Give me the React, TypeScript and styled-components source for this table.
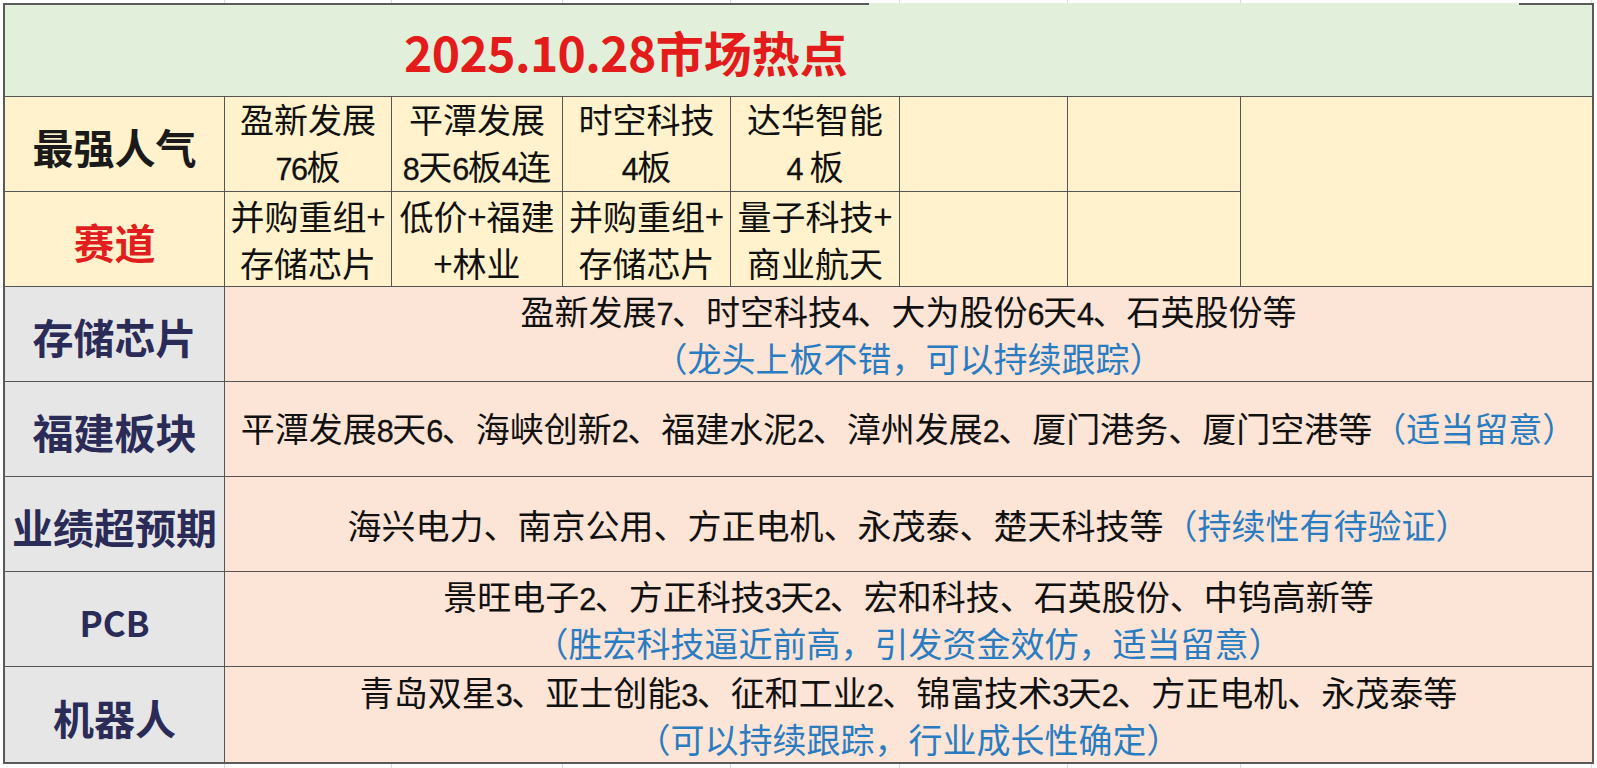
import React from 'react';
import styled, { createGlobalStyle } from 'styled-components';

const COLS = '220px 167px 171px 168px 169px 168px 173px 351px';
const LINE = '#555555';

const Global = createGlobalStyle`
  html, body { margin: 0; padding: 0; background: #ffffff; }
  body { font-family: "Noto Sans CJK SC", "Microsoft YaHei", sans-serif; }
`;

const Page = styled.div`
  width: 1597px;
  height: 768px;
  overflow: hidden;
  background: #ffffff;
  padding-left: 3px;
  box-sizing: border-box;
`;

const Strip = styled.div<{ $h: number }>`
  display: grid;
  grid-template-columns: ${COLS};
  height: ${(p) => p.$h}px;
  padding-left: 2px;
`;

const StripCell = styled.div`
  border-right: 1px solid #d8d8d8;
`;

const Table = styled.div`
  display: grid;
  grid-template-columns: ${COLS};
  grid-template-rows: 94px repeat(7, 95px);
  width: fit-content;
  border-left: 2px solid #5a5a5a;
  border-right: 2px solid #5a5a5a;
  border-bottom: 2px solid #5a5a5a;
  color: #111111;
`;

const Title = styled.div`
  grid-column: 1 / -1;
  box-sizing: border-box;
  padding: 2px 0 0 399px;
  display: flex;
  align-items: center;
  border-bottom: 1px solid ${LINE};
  background:
    linear-gradient(
        to right,
        #5a5a5a 0,
        #5a5a5a 864px,
        transparent 864px,
        transparent 1514px,
        #5a5a5a 1514px
      )
      top left / 100% 2px no-repeat,
    #e2efda;
  color: #e31b1b;
  font-size: 48px;
  font-weight: 700;
  white-space: nowrap;
`;

const TitleDate = styled.span`
  letter-spacing: -0.6px;
`;

const Cell = styled.div<{ $bg: string; $noRight?: boolean; $noBottom?: boolean }>`
  box-sizing: border-box;
  display: flex;
  flex-direction: column;
  align-items: center;
  justify-content: center;
  background: ${(p) => p.$bg};
  border-right: ${(p) => (p.$noRight ? 'none' : `1px solid ${LINE}`)};
  border-bottom: ${(p) => (p.$noBottom ? 'none' : `1px solid ${LINE}`)};
  white-space: nowrap;
`;

const Label = styled(Cell)<{ $color: string; $size?: number }>`
  color: ${(p) => p.$color};
  font-size: ${(p) => p.$size ?? 41}px;
  font-weight: 700;
  padding-top: 4px;
`;

const Data = styled(Cell)`
  font-size: 34px;
  line-height: 47px;
  padding-bottom: 1px;
`;

const Merged = styled(Cell)`
  grid-row: span 2;
`;

const Content = styled(Cell)`
  grid-column: 2 / -1;
  font-size: 34px;
  line-height: 43px;
`;

const Num = styled.span`
  font-family: "Liberation Sans", "DejaVu Sans", sans-serif;
  font-size: 0.9em;
  letter-spacing: -1.5px;
  -webkit-text-stroke: 0.3px currentColor;
`;

const Note = styled.span`
  color: #2a7cc1;
`;

const NoteLine = styled.div`
  color: #2a7cc1;
`;

const YELLOW = '#fff2cc';
const PEACH = '#fce4d6';
const GRAY = '#e7e6e6';
const NAVY = '#2b2b58';

function Txt({ s }: { s: string }) {
  const parts = s.split(/(\d+)/);
  return (
    <>
      {parts.map((p, i) =>
        /^\d+$/.test(p) ? <Num key={i}>{p}</Num> : <React.Fragment key={i}>{p}</React.Fragment>
      )}
    </>
  );
}

const hot = [
  ['盈新发展', '76板'],
  ['平潭发展', '8天6板4连'],
  ['时空科技', '4板'],
  ['达华智能', '4 板'],
];

const track = [
  ['并购重组+', '存储芯片'],
  ['低价+福建', '+林业'],
  ['并购重组+', '存储芯片'],
  ['量子科技+', '商业航天'],
];

type Sector = {
  name: string;
  size?: number;
  main: string;
  note: string;
  inline?: boolean;
};

const sectors: Sector[] = [
  {
    name: '存储芯片',
    main: '盈新发展7、时空科技4、大为股份6天4、石英股份等',
    note: '（龙头上板不错，可以持续跟踪）',
  },
  {
    name: '福建板块',
    main: '平潭发展8天6、海峡创新2、福建水泥2、漳州发展2、厦门港务、厦门空港等',
    note: '（适当留意）',
    inline: true,
  },
  {
    name: '业绩超预期',
    main: '海兴电力、南京公用、方正电机、永茂泰、楚天科技等',
    note: '（持续性有待验证）',
    inline: true,
  },
  {
    name: 'PCB',
    size: 35,
    main: '景旺电子2、方正科技3天2、宏和科技、石英股份、中钨高新等',
    note: '（胜宏科技逼近前高，引发资金效仿，适当留意）',
  },
  {
    name: '机器人',
    main: '青岛双星3、亚士创能3、征和工业2、锦富技术3天2、方正电机、永茂泰等',
    note: '（可以持续跟踪，行业成长性确定）',
  },
];

const stripCols = Array.from({ length: 8 });

export default function App() {
  return (
    <>
      <Global />
      <Page>
        <Strip $h={3}>
          {stripCols.map((_, i) => (
            <StripCell key={i} />
          ))}
        </Strip>
        <Table>
          <Title>
            <TitleDate>2025.10.28</TitleDate>市场热点
          </Title>

          <Label $bg={YELLOW} $color="#1a1a1a">最强人气</Label>
          {hot.map(([a, b], i) => (
            <Data key={`h${i}`} $bg={YELLOW}>
              <div>{a}</div>
              <div>
                <Txt s={b} />
              </div>
            </Data>
          ))}
          <Data $bg={YELLOW} />
          <Data $bg={YELLOW} />
          <Merged $bg={YELLOW} $noRight />

          <Label $bg={YELLOW} $color="#e01e1e">赛道</Label>
          {track.map(([a, b], i) => (
            <Data key={`t${i}`} $bg={YELLOW}>
              <div>{a}</div>
              <div>{b}</div>
            </Data>
          ))}
          <Data $bg={YELLOW} />
          <Data $bg={YELLOW} />

          {sectors.map((s, i) => {
            const last = i === sectors.length - 1;
            return (
              <React.Fragment key={s.name}>
                <Label $bg={GRAY} $color={NAVY} $size={s.size} $noBottom={last}>
                  {s.name}
                </Label>
                <Content $bg={PEACH} $noRight $noBottom={last}>
                  {s.inline ? (
                    <div>
                      <Txt s={s.main} />
                      <Note>{s.note}</Note>
                    </div>
                  ) : (
                    <>
                      <div>
                        <Txt s={s.main} />
                      </div>
                      <NoteLine>{s.note}</NoteLine>
                    </>
                  )}
                </Content>
              </React.Fragment>
            );
          })}
        </Table>
        <Strip $h={6}>
          {stripCols.map((_, i) => (
            <StripCell key={i} />
          ))}
        </Strip>
      </Page>
    </>
  );
}
